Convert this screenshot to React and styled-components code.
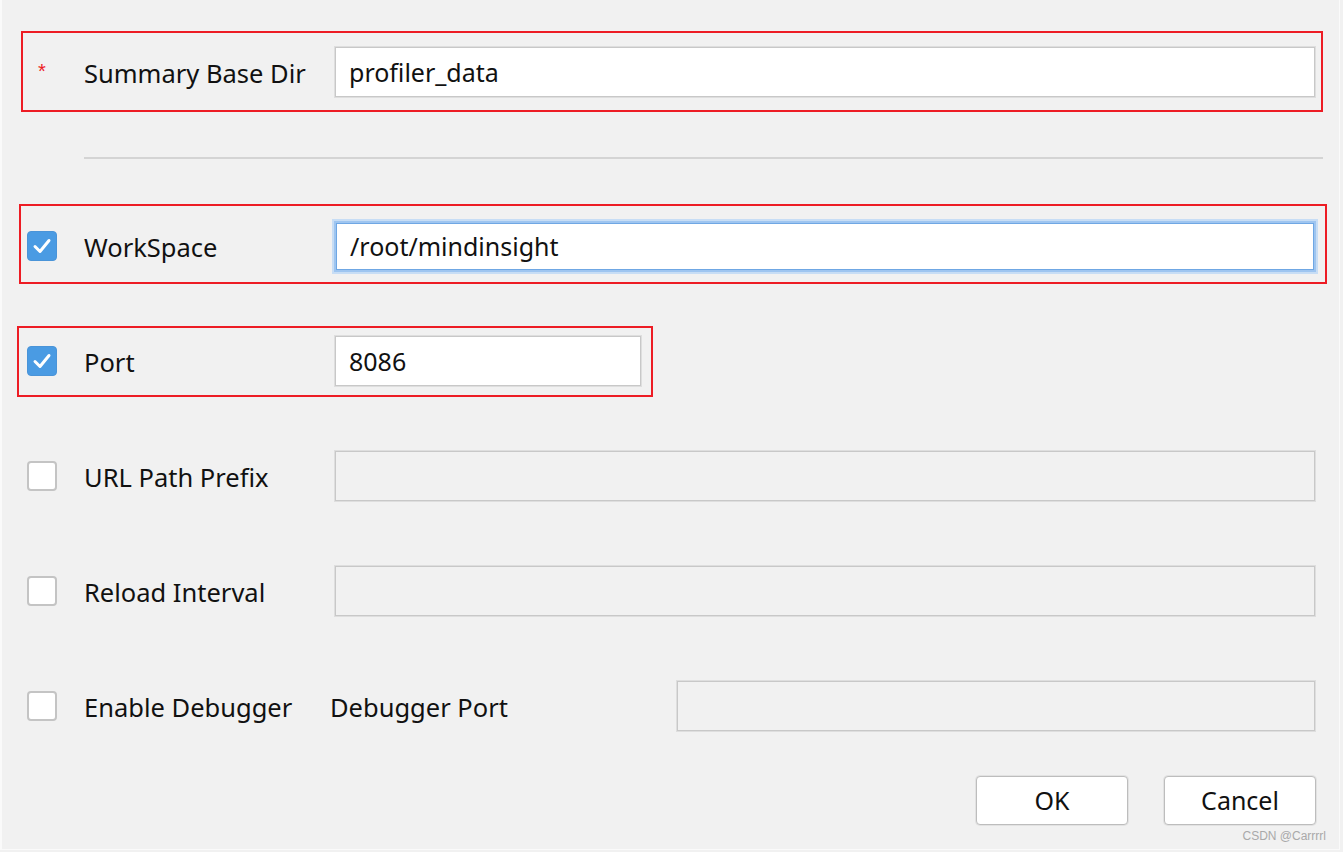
import React from 'react';
import styled, { createGlobalStyle, css } from 'styled-components';

const Global = createGlobalStyle`
  html, body {
    margin: 0;
    padding: 0;
    background: #f1f1f1;
  }
  * { box-sizing: border-box; }
`;

const Window = styled.div`
  width: 1340px;
  height: 850px;
  border-left: 2px solid #fafafa;
  border-right: 1px solid #fafafa;
  border-bottom: 1px solid #fafafa;
  background: #f1f1f1;
  padding: 47px 24px 0 25px;
  display: flex;
  flex-direction: column;
  font-family: "Noto Sans", "Open Sans", sans-serif;
  color: #111;
`;

const Row = styled.div`
  position: relative;
  height: 50px;
  display: flex;
  align-items: center;
  margin-top: ${p => p.$top || 0}px;

  ${p => p.$mark && css`
    &::after {
      content: '';
      position: absolute;
      pointer-events: none;
      top: ${p.$mark.top}px;
      bottom: ${p.$mark.bottom}px;
      left: ${p.$mark.left - 27}px;
      right: ${p.$mark.right - 28}px;
      border: 2px solid #ed1c24;
    }
  `}
`;

const Lead = styled.div`
  width: 30px;
  flex: none;
  display: flex;
  justify-content: center;
  align-items: center;
`;

const Star = styled.span`
  color: #ed1c24;
  font-family: "Liberation Sans", sans-serif;
  font-size: 20px;
  line-height: 1;
  margin-top: -2px;
`;

const Box = styled.div`
  width: 30px;
  height: 30px;
  border-radius: 4px;
  display: flex;
  align-items: center;
  justify-content: center;
  ${p => p.$on ? css`
    background: #4a9be3;
    border: 1px solid #4a94d8;
  ` : css`
    background: #fff;
    border: 2px solid #c4c4c4;
  `}
`;

const Label = styled.div`
  width: ${p => p.$w || 251}px;
  flex: none;
  margin-left: ${p => (p.$flush ? 0 : 27)}px;
  font-size: 25.5px;
  line-height: 1;
  white-space: nowrap;
  padding-top: 4px;
`;

const Field = styled.div`
  height: ${p => (p.$focus ? 47 : 50)}px;
  ${p => p.$width ? css`width: ${p.$width}px; flex: none;` : css`flex: 1;`}
  ${p => p.$focus && css`margin-left: 1px; margin-right: 1px;`}
  display: flex;
  align-items: center;
  padding-left: 13px;
  font-size: 25px;
  white-space: nowrap;
  background: ${p => (p.$disabled ? '#f1f1f1' : '#fff')};
  border: 1px solid ${p => (p.$focus ? '#6fa7e4' : '#c8c8c8')};
  box-shadow: ${p => p.$focus
    ? '0 0 0 2px #9ec5f0, 0 0 0 4px #c7ddf5'
    : '0 0 0 1px #dedede'};
`;

const Separator = styled.div`
  height: 2px;
  margin: 60px -8px 0 57px;
  background: #d4d4d4;
`;

const Footer = styled.div`
  margin-top: 45px;
  display: flex;
  flex-direction: column;
  align-items: flex-end;
`;

const Buttons = styled.div`
  display: flex;
  gap: 36px;
  margin-right: -1px;
`;

const Button = styled.button`
  width: 152px;
  height: 49px;
  background: #fff;
  border: 1px solid #bdbdbd;
  box-shadow: 0 0 0 1px #e2e2e2;
  border-radius: 4px;
  font-family: "Noto Sans", "Open Sans", sans-serif;
  font-size: 25px;
  color: #111;
  padding: 0 0 2px;
`;

const Watermark = styled.div`
  margin-top: 4px;
  margin-right: -11px;
  font-family: "Liberation Sans", sans-serif;
  font-size: 12px;
  color: #a9a9a9;
`;

const Check = () => (
  <svg width="20" height="18" viewBox="0 0 20 18">
    <path d="M3 9.5 L8 14.5 L17 3.5" fill="none" stroke="#fff" strokeWidth="3" strokeLinecap="round" strokeLinejoin="round" />
  </svg>
);

const CheckBox = ({ on }) => (
  <Box $on={on}>{on && <Check />}</Box>
);

export default function App() {
  return (
    <>
      <Global />
      <Window>
        <Row $mark={{ top: -16, bottom: -15, left: 21, right: 20 }}>
          <Lead><Star>*</Star></Lead>
          <Label>Summary Base Dir</Label>
          <Field>profiler_data</Field>
        </Row>

        <Separator />

        <Row $top={62} $mark={{ top: -17, bottom: -13, left: 19, right: 16 }}>
          <Lead><CheckBox on /></Lead>
          <Label>WorkSpace</Label>
          <Field $focus>/root/mindinsight</Field>
        </Row>

        <Row $top={65} $mark={{ top: -10, bottom: -11, left: 17, right: 690 }}>
          <Lead><CheckBox on /></Lead>
          <Label>Port</Label>
          <Field $width={306}>8086</Field>
        </Row>

        <Row $top={65}>
          <Lead><CheckBox /></Lead>
          <Label>URL Path Prefix</Label>
          <Field $disabled />
        </Row>

        <Row $top={65}>
          <Lead><CheckBox /></Lead>
          <Label>Reload Interval</Label>
          <Field $disabled />
        </Row>

        <Row $top={65}>
          <Lead><CheckBox /></Lead>
          <Label $w={246}>Enable Debugger</Label>
          <Label $w={347} $flush>Debugger Port</Label>
          <Field $disabled />
        </Row>

        <Footer>
          <Buttons>
            <Button>OK</Button>
            <Button>Cancel</Button>
          </Buttons>
          <Watermark>CSDN @Carrrrl</Watermark>
        </Footer>
      </Window>
    </>
  );
}
